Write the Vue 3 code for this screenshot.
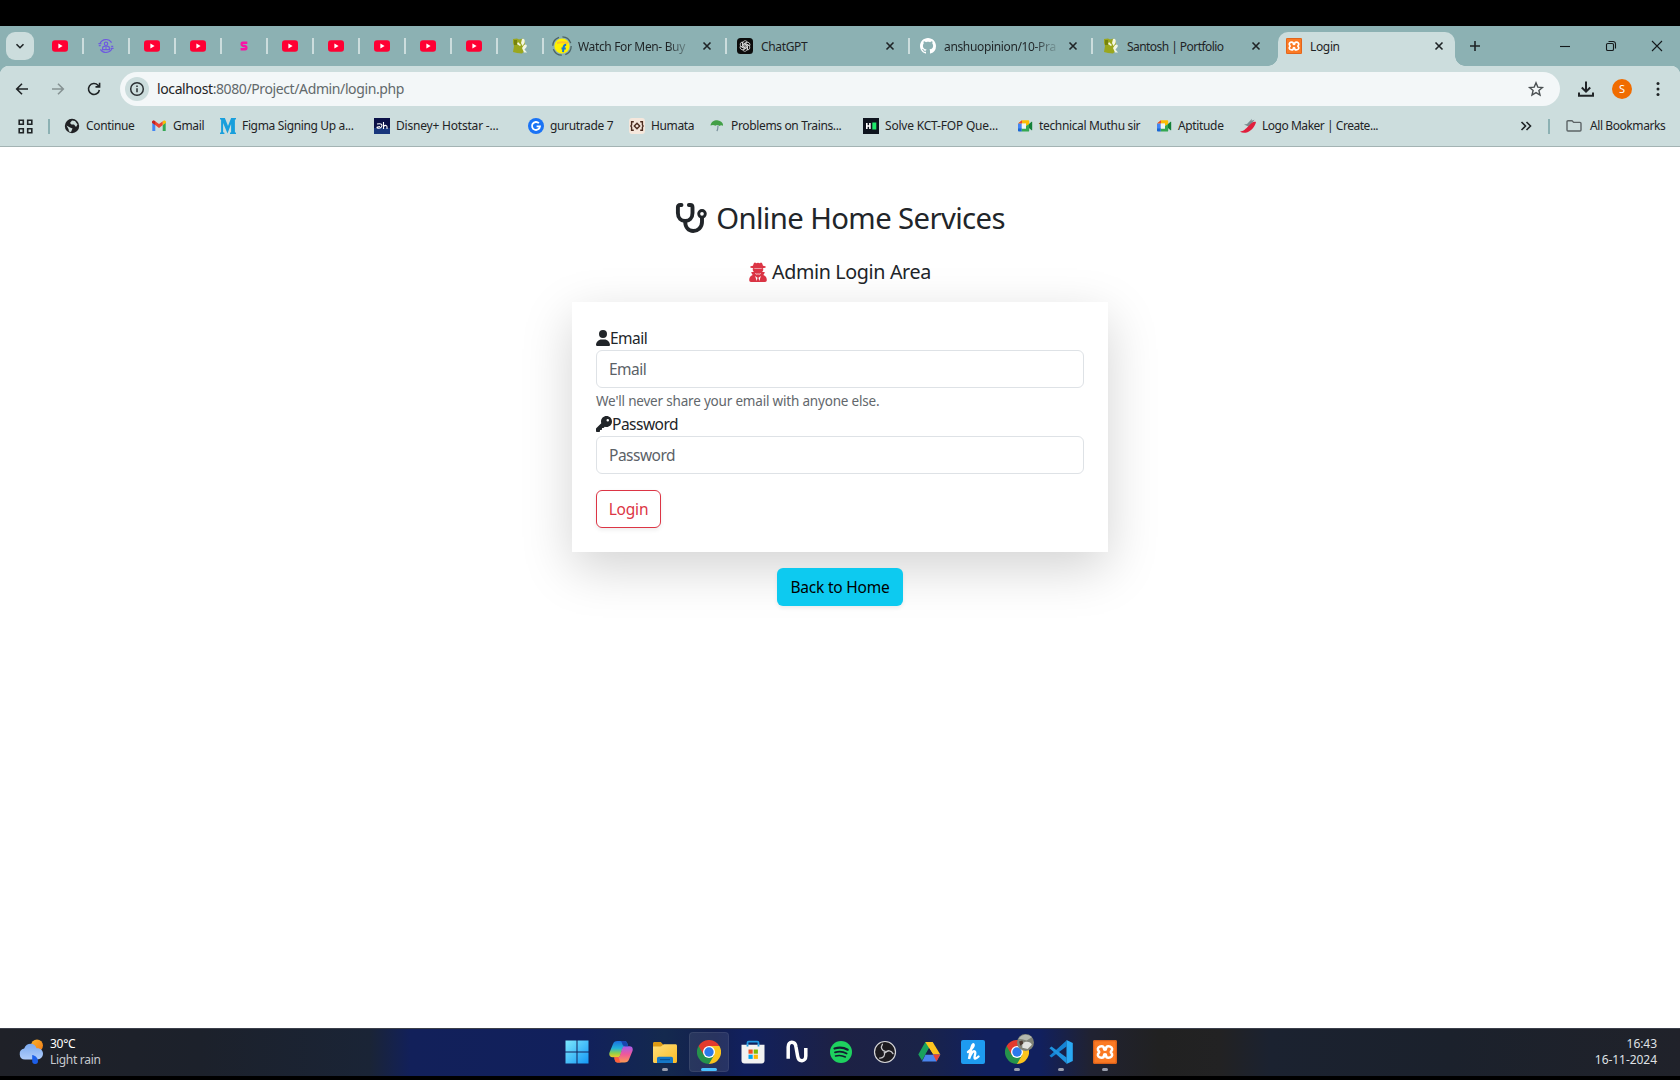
<script setup>
import { computed } from 'vue'

const small = ['yt', 'orbit', 'yt', 'yt', 's', 'yt', 'yt', 'yt', 'yt', 'yt', 'leaf']
const tabs = [
  { icon: 'flip', title: 'Watch For Men- Buy', fade: true },
  { icon: 'gpt', title: 'ChatGPT' },
  { icon: 'github', title: 'anshuopinion/10-Pra', fade: true },
  { icon: 'leaf', title: 'Santosh | Portfolio', last: true },
]
const marks = [
  { icon: 'globe', title: 'Continue', w: 87 },
  { icon: 'gmail', title: 'Gmail', w: 69 },
  { icon: 'm', title: 'Figma Signing Up a...', w: 154 },
  { icon: 'dh', title: 'Disney+ Hotstar -...', w: 154 },
  { icon: 'g', title: 'gurutrade 7', w: 101 },
  { icon: 'humata', title: 'Humata', w: 80 },
  { icon: 'umbrella', title: 'Problems on Trains...', w: 154 },
  { icon: 'hr', title: 'Solve KCT-FOP Que...', w: 154 },
  { icon: 'meet', title: 'technical Muthu sir', w: 139 },
  { icon: 'meet', title: 'Aptitude', w: 84 },
  { icon: 'pepper', title: 'Logo Maker | Create...', w: 140 },
]
const apps = [
  { icon: 'win' }, { icon: 'copilot' }, { icon: 'folder', run: true },
  { icon: 'chrome', active: true }, { icon: 'store' }, { icon: 'nn' },
  { icon: 'spotify' }, { icon: 'obs' }, { icon: 'drive' }, { icon: 'hh' },
  { icon: 'chrome', run: true, badge: true }, { icon: 'code', run: true },
  { icon: 'xampp', run: true },
]
const items = computed(() => marks.map((m) => ({ ...m, style: { width: m.w + 'px' } })))
const turns = [0, 60, 120, 180, 240, 300]
</script>

<template>
  <svg class="defs" aria-hidden="true">
    <defs>
      <linearGradient id="gw" x1="0" y1="0" x2="1" y2="1"><stop offset="0" stop-color="#7de8fd" /><stop offset="1" stop-color="#1497f5" /></linearGradient>
      <linearGradient id="gf" x1="0" y1="0" x2="1" y2="1"><stop offset="0" stop-color="#ffdf7a" /><stop offset="1" stop-color="#fcbc25" /></linearGradient>
      <linearGradient id="gc1" x1="0" y1="0" x2="0" y2="1"><stop offset="0" stop-color="#1a6fe0" /><stop offset=".45" stop-color="#23b2d8" /><stop offset=".75" stop-color="#8fcf4a" /><stop offset="1" stop-color="#f5c827" /></linearGradient>
      <linearGradient id="gc2" x1="0" y1="0" x2="0" y2="1"><stop offset="0" stop-color="#a45cf0" /><stop offset=".5" stop-color="#f0589a" /><stop offset="1" stop-color="#fb9a52" /></linearGradient>
      <linearGradient id="gs" x1="0" y1="0" x2="1" y2="1"><stop offset="0" stop-color="#fbb32a" /><stop offset="1" stop-color="#f07a18" /></linearGradient>
      <linearGradient id="gcl" x1="0" y1="0" x2="0" y2="1"><stop offset="0" stop-color="#7ba9ee" /><stop offset="1" stop-color="#b0cdfb" /></linearGradient>
      <symbol id="yt" viewBox="0 0 16 16"><rect y="2.2" width="16" height="11.6" rx="3" fill="#ff0033" /><path d="M6.4 5.6v4.8L10.6 8z" fill="#fff" /></symbol>
      <symbol id="orbit" viewBox="0 0 16 16"><g fill="none" stroke="#6f5be0" stroke-width="1.2"><circle cx="8" cy="5.8" r="1.7" /><path d="M4.6 11.6V10c0-1.3 1.2-1.8 3.4-1.8s3.4.5 3.4 1.8v1.6zM7 10h2M2 5.4A6.6 6.6 0 0 1 13.6 4.6M14 10.6A6.6 6.6 0 0 1 2.4 11.4" /><path d="M.4 5.6h3M.8 7.6h2M12.6 10.4h3M13.2 8.4h2" /></g></symbol>
      <symbol id="s" viewBox="0 0 16 16"><path d="M11.3 4.8H6.6c-1.2 0-1.4 2.6 0 2.9l2.8.5c1.5.3 1.3 3-.1 3H4.6" fill="none" stroke="#f915a5" stroke-width="2.4" /></symbol>
      <symbol id="leaf" viewBox="0 0 16 16"><path d="M1 1l4-.5 2 1 4-1 2 3-1 10-2 2-5-.5-4-1 1-6-1-3z" fill="#9aa71d" /><path d="M2 2h3v5H2z" fill="#76820f" /><path d="M10 1c2-1 3.500 1 2.500 4L10.500 8 9 5zM12 7c2-1.500 3.500 0 2.500 2l-2 2.500 2.500 3h-3L10 10zM6 4l3 3-1 1-3-2z" fill="#f3f6e4" /></symbol>
      <symbol id="flip" viewBox="0 0 20 20"><circle cx="10" cy="10" r="9.200" fill="none" stroke="#4c6366" stroke-width="1.300" stroke-dasharray="11 3.500" /><circle cx="10" cy="10" r="7.600" fill="#fff200" /><path d="M5 6c3-1 7-1 11 0v2c-4-1-8-1-11 0z" fill="#fbc02d" /><path d="M14.200 8.700c-2 0-2.500 1-2.700 3l-.5 4.500M9.500 12.600h4.300" fill="none" stroke="#1976d2" stroke-width="2" /></symbol>
      <symbol id="gpt" viewBox="0 0 16 16"><rect width="16" height="16" rx="3.500" fill="#0c0c0c" /><g fill="none" stroke="#fff" stroke-width=".65"><path v-for="r in turns" :key="r" d="M5.800 8.900V5A2.350 2.350 0 0 1 10 3.600M6.900 8.600V5.700L10.400 3.700" :transform="`rotate(${r} 8 8)`" /></g></symbol>
      <symbol id="github" viewBox="0 0 16 16"><path fill="#fff" d="M8 0C3.580 0 0 3.580 0 8c0 3.540 2.290 6.530 5.470 7.590.4.070.55-.17.55-.38 0-.19-.01-.82-.01-1.490-2.010.37-2.530-.49-2.690-.94-.09-.23-.48-.94-.82-1.130-.28-.15-.68-.52-.01-.53.63-.01 1.080.58 1.230.82.72 1.210 1.870.87 2.330.66.07-.52.28-.87.51-1.070-1.780-.2-3.640-.89-3.640-3.950 0-.87.31-1.590.82-2.150-.08-.2-.36-1.020.08-2.120 0 0 .67-.21 2.200.82.64-.18 1.320-.27 2-.27s1.360.09 2 .27c1.530-1.040 2.200-.82 2.200-.82.44 1.100.16 1.920.08 2.120.51.56.82 1.270.82 2.150 0 3.070-1.870 3.750-3.650 3.950.29.25.54.73.54 1.480 0 1.070-.01 1.930-.01 2.200 0 .21.15.46.55.38A8.010 8.010 0 0 0 16 8c0-4.420-3.580-8-8-8z" /></symbol>
      <symbol id="xampp" viewBox="0 0 24 24"><rect width="24" height="24" rx="2" fill="#fb7a24" /><rect x=".7" y=".7" width="22.600" height="22.600" rx="1.600" fill="none" stroke="#d9601a" stroke-width="1.200" /><path d="M8.600 6.200C5.600 6.200 4.400 8.200 5 10c.3.900 1.200 1.100 1.200 2S5.300 13.100 5 14c-.6 1.800.6 3.800 3.600 3.800 2.400 0 2.400-1.600 2.400-2.600 0-.7.400-1 1-1s1 .3 1 1c0 1 0 2.600 2.400 2.600 3 0 4.200-2 3.600-3.800-.3-.9-1.200-1.100-1.200-2s.9-1.100 1.200-2c.6-1.800-.6-3.800-3.600-3.800-2.400 0-2.400 1.600-2.400 2.600 0 .7-.4 1-1 1s-1-.3-1-1c0-1 0-2.600-2.400-2.600z" fill="none" stroke="#fff" stroke-width="2.500" /></symbol>
      <symbol id="globe" viewBox="0 0 16 16"><circle cx="8" cy="8" r="7.200" fill="#202124" /><path d="M2.500 7.500L6 9.500l2.500 1L7 14l-2-.5-.5-2.500zM8 2.500l3 .5 2.500 3.500L12 9l-2-2.500H7.500L6 5z" fill="#ccdddb" /></symbol>
      <symbol id="gmail" viewBox="0 0 16 16"><path d="M1.300 4v9h3V7z" fill="#4285f4" /><path d="M11.700 7v6h3V4z" fill="#34a853" /><path d="M1 4.500C1 2.600 3 2.200 4.200 3.200L8 6.100l3.800-2.900v3.900L8 10 4.200 7.100z" fill="#ea4335" /><path d="M1 4.300c0-1.800 2-2.200 3.200-1.200v4L1 4.800z" fill="#c5221f" /><path d="M15 4.300c0-1.800-2-2.200-3.200-1.200v4L15 4.800z" fill="#fbbc04" /></symbol>
      <symbol id="m" viewBox="0 0 16 16"><path d="M0 0h4.900L8 8 11.100 0H16v1.200l-1.100.6v12.400l1.100.6V16h-6v-1.200l1.100-.6V6L7.500 15.500 3.100 5v9.200l1.300.6V16H0v-1.200l1.100-.6V1.800L0 1.200z" fill="#189fdc" /></symbol>
      <symbol id="dh" viewBox="0 0 16 16"><rect width="16" height="16" fill="#0b1148" /><rect y="10" width="16" height="6" fill="#18367c" /><path d="M3 6c5-1 6 1 4 3.500-1 .8-4 1-4 0s1.500-1 3-1M9.500 4v7M9.500 8.500c2-2 3.500-1 3.500.5v2" fill="none" stroke="#fff" stroke-width="1.100" /></symbol>
      <symbol id="g" viewBox="0 0 16 16"><circle cx="8" cy="8" r="8" fill="#1a73f5" /><path d="M10.900 5.200A4 4 0 1 0 12 8.400H8.600" fill="none" stroke="#fff" stroke-width="1.800" /></symbol>
      <symbol id="humata" viewBox="0 0 16 16"><rect width="16" height="16" rx="3" fill="#f5e7dc" /><path d="M4.800 3.700H2.600v3.100L1.900 8l.7 1.200v3.100h2.200M11.200 3.700h2.200v3.100l.7 1.200-.7 1.200v3.100h-2.200M8 5.300L10.700 8 8 10.700 5.300 8z" fill="none" stroke="#4b2c20" stroke-width="1.400" /></symbol>
      <symbol id="umbrella" viewBox="0 0 16 16"><path d="M1.500 7.500C2 3.800 5.600 1.900 9 2.400s5.500 3 5 5.300c-1.500-.9-2.500-.7-3.500.3-1.400-1.300-2.800-1.200-4.200-.3-1.200-.9-3-1-4.800-.2z" fill="#43a047" /><path d="M9 7.500c-.3 2 .2 4-1.200 5.500" fill="none" stroke="#78909c" stroke-width="1.200" /></symbol>
      <symbol id="hr" viewBox="0 0 16 16"><rect width="16" height="16" fill="#0e141e" /><path d="M3.800 5v6M6.900 5v6M3.800 8h3" stroke="#fff" stroke-width="1.600" /><rect x="9.300" y="4.500" width="4" height="7" fill="#1fe96b" /></symbol>
      <symbol id="meet" viewBox="0 0 16 16"><path d="M5 2.200h6c.8 0 1.200.5 1.200 1.200V6.500L9 8V5.600H1z" fill="#fbbc04" /><path d="M1 5.600l4-3.400v3.400z" fill="#ea4335" /><path d="M1 5.600h3.800V11H1z" fill="#4285f4" /><path d="M1 10.600h3.800v3H2.200c-.8 0-1.200-.5-1.200-1.200z" fill="#1967d2" /><path d="M4.800 10.600H9V8l3.200-2v6.400c0 .8-.5 1.200-1.200 1.200H4.800z" fill="#34a853" /><path d="M12 6l2.600-2.200c.3-.2.600-.1.600.3v7.800c0 .4-.3.500-.6.300L12 10z" fill="#128038" /><path d="M4.800 5.600H9v5H4.800z" fill="#eef5f4" /></symbol>
      <symbol id="pepper" viewBox="0 0 16 16"><path d="M4 6.500l3-.5L12 .8l-.5 2 3-1L9.500 9z" fill="#7d8b90" /><path d="M0 13.500c3.500 0 6-3 8.500-5.500S13.500 3 16 4c-1 4.500-4.500 8.500-8.500 10.200-3 1-5.500.8-7.500-.7z" fill="#e01e3c" /></symbol>
      <symbol id="win" viewBox="0 0 24 24"><path d="M.5.500h11v11H.5zM12.500.500h11v11h-11zM.5 12.500h11v11H.5zM12.500 12.500h11v11h-11z" fill="url(#gw)" /></symbol>
      <symbol id="copilot" viewBox="0 0 24 24"><path d="M8.500 1h7c1.600 0 2.300 1 2.800 2.500l.9 2.700h-2.700c-1.600 0-2.400.8-2.900 2.300l-2 6.500c-.6 1.700-1.500 2.300-3 2.300H3.500c-2.600 0-3.800-2-3-4.800L4 4c.7-2 2-3 4.500-3z" fill="url(#gc1)" /><path d="M15.500 22.500h-7c-1.600 0-2.300-1-2.700-2.500l-.5-2.700h3c1.600 0 2.400-.8 2.900-2.300l2-6.500c.6-1.700 1.500-2.300 3-2.300h4.300c2.600 0 3.800 2 3 4.800l-3.500 8.500c-.7 2-2 3-4.500 3z" fill="url(#gc2)" /><path d="M11 1h4.500c1.600 0 2.300 1 2.800 2.500l.9 2.700h-3.400c-1 0-1.900-.6-2.300-1.700L13 3c-.4-1.200-1-1.900-2-2z" fill="#1746b0" /><path d="M12.500 22.500H8.500c-1.600 0-2.300-1-2.700-2.500l-.5-2.700h2.900c1 0 1.600.5 2 1.700l.5 2c.3.900.8 1.300 1.800 1.500z" fill="#ff5f3c" /></symbol>
      <symbol id="folder" viewBox="0 0 24 24"><path d="M0 3.500C0 2.500.6 2 1.500 2h6.300L10.500 5H10v4H0z" fill="#dd9a13" /><path d="M0 6.500h8l2.800-2.300h11.700c.9 0 1.500.6 1.500 1.500v15.800c0 .9-.6 1.500-1.500 1.500h-21C.6 23 0 22.400 0 21.500z" fill="url(#gf)" /><path d="M4 23v-4.500c0-1 .8-1.800 1.800-1.800h12.400c1 0 1.800.8 1.800 1.800V23z" fill="#1478c8" /><path d="M7 19.700h10" stroke="#0b4d8c" stroke-width="1" /></symbol>
      <symbol id="chrome" viewBox="0 0 24 24"><path d="M12 12V6h10.400A12 12 0 0 1 12 24z" fill="#fcc41d" /><path d="M12 12l5.200 3L12 24A12 12 0 0 1 1.600 6z" fill="#26934b" /><path d="M1.600 6L6.800 15 12 12V6h10.400A12 12 0 0 0 1.600 6z" fill="#e33b2e" /><circle cx="12" cy="12" r="6" fill="#fff" /><circle cx="12" cy="12" r="4.700" fill="#2b79ea" /></symbol>
      <symbol id="store" viewBox="0 0 24 24"><path d="M6.500 7V2.800c0-.7.5-1.200 1.200-1.200h8.600c.7 0 1.200.5 1.200 1.200V7" fill="none" stroke="#1f9ae4" stroke-width="1.800" /><path d="M.5 4.800h23v15.700c0 2-1 3-3 3h-17c-2 0-3-1-3-3z" fill="#f2f2f2" /><path d="M5.600 4.800h1.800V6.500H5.600zM16.600 4.800h1.800v1.700h-1.800z" fill="#1f9ae4" /><path d="M7.500 9.500h4.200v4.200H7.500z" fill="#f25022" /><path d="M12.700 9.500h4.200v4.200h-4.200z" fill="#7fba00" /><path d="M7.500 14.700h4.200v4.200H7.500z" fill="#00a4ef" /><path d="M12.700 14.700h4.200v4.200h-4.200z" fill="#ffb900" /></symbol>
      <symbol id="nn" viewBox="0 0 24 24"><path d="M3.200 18.700V7c0-6.200 7-6.200 7.800 0l1.600 9c1 6.500 8.200 6 8.200 0V8" fill="none" stroke="#fff" stroke-width="3.500" /></symbol>
      <symbol id="spotify" viewBox="0 0 24 24"><circle cx="12" cy="12" r="11" fill="#1ed15f" /><g fill="none" stroke="#121c30" stroke-linecap="round"><path d="M5.500 8.500c4.500-1.300 9.500-.9 13.200 1.200" stroke-width="2.200" /><path d="M6 12.300c4-1.100 8.300-.7 11.600 1.200" stroke-width="1.800" /><path d="M6.500 15.900c3.500-.9 7-.5 9.900 1.100" stroke-width="1.500" /></g></symbol>
      <symbol id="obs" viewBox="0 0 24 24"><circle cx="12" cy="12" r="10.500" fill="#1d1b20" stroke="#d5d5d7" stroke-width="1.200" /><g fill="none" stroke="#c9c9cc" stroke-width="1.300" stroke-linecap="round"><path v-for="r in [0, 120, 240]" :key="r" d="M12.300 11.300C8.800 10.800 7.300 7.500 9.400 4.300" :transform="`rotate(${r} 12 12)`" /></g></symbol>
      <symbol id="drive" viewBox="0 0 24 24"><path d="M8.300 2h7.400L5 20.500 1.300 14.500z" fill="#1aa15d" /><path d="M8.300 2h7.400l7.600 12.500h-7.300z" fill="#fcc31e" /><path d="M8.600 14.500h14.700L19.500 21.500H5z" fill="#4a85ee" /><path d="M16 14.500h7.300L19.500 21.500z" fill="#e94335" /><path d="M12 8.300l4 6.200H8.500z" fill="#161f47" /></symbol>
      <symbol id="hh" viewBox="0 0 24 24"><rect width="24" height="24" rx="2" fill="#1e9bf0" /><path d="M7 12c3-2 6.500-6 5.500-7.500S9.500 10 8 19c1.500-5 4-8.500 5.800-7.500s-1.600 6.500.2 7c1.200.3 2.500-1 3.500-2" fill="none" stroke="#fff" stroke-width="2.400" stroke-linecap="round" /></symbol>
      <symbol id="code" viewBox="0 0 24 24"><path d="M17.500.5L2 14.500l-1.600 1.300L2.500 17.500 17.500 6.600z" fill="#1583d4" /><path d="M17.500 23.500L2 9.500.4 8.200 2.500 6.500l15 10.900z" fill="#1f94e0" /><path d="M17.500 0l6.300 3v18l-6.300 3z" fill="#2aa9f3" /></symbol>
    </defs>
  </svg>

  <div class="screen">
    <header class="tabs">
      <div class="search"><svg viewBox="0 0 10 10" width="10" height="10"><path d="M1.500 3.200L5 6.700l3.500-3.500" class="ln" /></svg></div>
      <div v-for="(s, i) in small" :key="'s' + i" class="mini"><svg width="16" height="16"><use :href="'#' + s" /></svg></div>
      <div v-for="t in tabs" :key="t.title" class="tab" :class="{ last: t.last }">
        <svg class="fav" :class="{ big: t.icon === 'flip' }"><use :href="'#' + t.icon" /></svg>
        <span class="title" :class="{ fade: t.fade }">{{ t.title }}</span>
        <svg class="x" viewBox="0 0 10 10"><path d="M1.500 1.500l7 7M8.500 1.500l-7 7" class="ln" /></svg>
      </div>
      <div class="tab active">
        <svg class="fav"><use href="#xampp" /></svg>
        <span class="title">Login</span>
        <svg class="x" viewBox="0 0 10 10"><path d="M1.500 1.500l7 7M8.500 1.500l-7 7" class="ln" /></svg>
      </div>
      <svg class="plus" viewBox="0 0 12 12"><path d="M6 1v10M1 6h10" class="ln" /></svg>
      <div class="wins">
        <svg viewBox="0 0 12 12"><path d="M1 6.500h10" class="thin" /></svg>
        <svg viewBox="0 0 12 12"><path d="M3.500 1.500H8a2.500 2.500 0 0 1 2.500 2.500v4.500M2.800 3.500h4.400c.8 0 1.300.5 1.300 1.300v4.400c0 .8-.5 1.300-1.300 1.300H2.800c-.8 0-1.300-.5-1.300-1.300V4.800c0-.8.5-1.300 1.300-1.300z" class="thin" /></svg>
        <svg viewBox="0 0 12 12"><path d="M1 1l10 10M11 1L1 11" class="thin" /></svg>
      </div>
    </header>

    <section class="chrome">
      <div class="bar">
        <svg class="nav" viewBox="0 0 16 16"><path d="M14 8H3M8 2.700L2.700 8 8 13.300" class="ln" /></svg>
        <svg class="nav dim" viewBox="0 0 16 16"><path d="M2 8h11M8 2.700L13.300 8 8 13.300" class="ln" /></svg>
        <svg class="nav reload" viewBox="0 0 16 16"><path d="M13.400 9A5.500 5.500 0 1 1 12 4.200L13.300 5.600M13.600 1.800v4.100H9.500" class="ln" /></svg>
        <div class="url">
          <div class="info"><svg viewBox="0 0 16 16" width="16" height="16"><circle cx="8" cy="8" r="6.300" fill="none" stroke="#2b3033" stroke-width="1.500" /><path d="M8 7.200v4M8 4.500v1.400" stroke="#2b3033" stroke-width="1.500" /></svg></div>
          <div class="addr"><b>localhost</b>:8080/Project/Admin/login.php</div>
          <svg class="star" viewBox="0 0 18 18"><path d="M9 2.800l1.800 4.300 4.600.4-3.500 3 1.100 4.600L9 12.600l-4 2.500 1.100-4.600-3.500-3 4.600-.4z" fill="none" stroke="#4a5052" stroke-width="1.400" /></svg>
        </div>
        <svg class="dl" viewBox="0 0 18 18"><path d="M9 1.500v10M4.800 7.500L9 11.700l4.200-4.200M2 12.500v3.300h14v-3.300" fill="none" stroke="#202427" stroke-width="2" /></svg>
        <div class="avatar">S</div>
        <svg class="dots" viewBox="0 0 4 16"><circle cx="2" cy="2.500" r="1.500" /><circle cx="2" cy="8" r="1.500" /><circle cx="2" cy="13.500" r="1.500" /></svg>
      </div>
      <div class="marks">
        <svg class="grid" viewBox="0 0 15 15"><path d="M1.200 1.200h4.100v4.100H1.200zM9.700 1.200h4.100v4.100H9.700zM1.200 9.700h4.100v4.100H1.200zM9.700 9.700h4.100v4.100H9.700z" class="ln" /></svg>
        <i class="sep"></i>
        <div class="list">
          <div v-for="m in items" :key="m.title" class="mark" :style="m.style"><svg width="16" height="16"><use :href="'#' + m.icon" /></svg><span>{{ m.title }}</span></div>
        </div>
        <svg class="more" viewBox="0 0 12 12"><path d="M1.500 2L5.500 6l-4 4M6.500 2l4 4-4 4" class="ln" /></svg>
        <i class="sep second"></i>
        <svg class="dir" viewBox="0 0 16 16"><path d="M1 3.700c0-.6.400-1 1-1h4l1.700 1.700H14c.6 0 1 .4 1 1V12c0 .6-.4 1-1 1H2c-.6 0-1-.4-1-1z" fill="none" stroke="#5c6466" stroke-width="1.400" /></svg>
        <span class="all">All Bookmarks</span>
      </div>
    </section>

    <main class="page">
      <h2 class="brand">
        <svg viewBox="0 0 32 32"><g fill="none" stroke="#212529" stroke-width="3.900" stroke-linecap="round"><path d="M6.500 3H5.200C3.600 3 2.900 3.800 2.900 5.300V11c0 5 3.300 8 7.300 8s7.300-3 7.300-8V5.300C17.500 3.800 16.800 3 15.200 3h-1.300" /><path d="M10.200 19.500C10.200 25.500 13.700 29 18.200 29s8.800-3.500 8.800-9v-5" /></g><circle cx="27" cy="11.800" r="3.300" fill="#fff" stroke="#212529" stroke-width="2.900" /></svg>
        <span>Online Home Services</span>
      </h2>
      <p class="area">
        <svg viewBox="0 0 448 512"><path fill="#dc3545" d="M224 16c-19 0-35 16-52 14-22-40-62-12-76 66-44 8-72 18-72 32s30 26 76 33v23H96c-9 0-14 10-9 18l30 54H64c-9 0-15 9-12 17l35 60C34 354 0 400 0 448v22c0 23 19 42 42 42h364c23 0 42-19 42-42v-22c0-48-34-94-87-115l35-60c3-8-3-17-12-17h-53l30-54c5-8 0-18-9-18h-4v-23c46-7 76-19 76-33s-28-24-72-32c-14-78-54-106-76-66-17 2-33-14-52-14z" /><path fill="#fff" d="M128 169h192v10H128zM150 290c24 16 52 16 74 2 22 14 50 14 74-2v12c-20 26-56 26-74 2-18 24-54 24-74-2zM150 358l62 42-22 84zM298 358l-62 42 22 84z" /></svg>
        <span>Admin Login Area</span>
      </p>
      <form class="card" @submit.prevent>
        <label><svg class="user" viewBox="0 0 448 512"><path d="M224 256A128 128 0 1 0 224 0a128 128 0 1 0 0 256zm-45.700 48C79.800 304 0 383.800 0 482.300C0 498.700 13.300 512 29.700 512H418.300c16.400 0 29.700-13.300 29.700-29.700C448 383.800 368.200 304 269.700 304H178.300z" /></svg><span>Email</span></label>
        <input type="email" placeholder="Email" />
        <small>We'll never share your email with anyone else.</small>
        <label><svg class="key" viewBox="0 0 512 512"><path d="M336 352c97.200 0 176-78.800 176-176S433.200 0 336 0S160 78.800 160 176c0 18.700 2.900 36.800 8.300 53.700L7 391c-4.500 4.500-7 10.600-7 17v80c0 13.300 10.700 24 24 24h80c13.300 0 24-10.700 24-24V448h40c13.300 0 24-10.700 24-24V384h40c6.400 0 12.500-2.500 17-7l33.300-33.300c16.900 5.400 35 8.300 53.700 8.300zM376 96a40 40 0 1 1 0 80 40 40 0 1 1 0-80z" /></svg><span>Password</span></label>
        <input type="password" placeholder="Password" />
        <button class="login">Login</button>
      </form>
      <a class="back">Back to Home</a>
    </main>

    <footer class="task">
      <div class="weather">
        <svg viewBox="0 0 24 26"><circle cx="18" cy="6.500" r="6" fill="url(#gs)" /><path d="M6 20.500a5.500 5.500 0 0 1-.8-10.900C6.500 6 9 4.800 11.500 4.800c3.200 0 5.300 1.900 6 4.400 3.500-.4 6.500 1.800 6.500 5.400 0 3.500-2.500 5.900-6 5.900z" fill="url(#gcl)" /><path d="M13.200 16c3.200.5 5.800 3 5.800 6a2.900 2.900 0 0 1-5.800.3z" fill="#1d5fe8" /></svg>
        <div><div class="temp">30°C</div><div class="rain">Light rain</div></div>
      </div>
      <div class="apps">
        <div v-for="(a, i) in apps" :key="i" class="app" :class="{ on: a.active, run: a.run }">
          <svg width="24" height="24"><use :href="'#' + a.icon" /></svg>
          <svg v-if="a.badge" class="badge" viewBox="0 0 16 16"><circle cx="8" cy="8" r="8" fill="#7f8277" /><path d="M1.500 4.500A8 8 0 0 1 14 3L9 6 5 5z" fill="#b4b8ae" /><path d="M5 9c3-3 8-2 9 1l-4 4-5-1z" fill="#e2e4df" /><path d="M2 7l3-1 1 3-3 2z" fill="#4c3b30" /></svg>
        </div>
      </div>
      <div class="clock"><div>16:43</div><div>16-11-2024</div></div>
    </footer>
  </div>
</template>

<style>
html, body { margin: 0; background: #000; overflow: hidden; }
</style>

<style scoped>
* { box-sizing: border-box; }
.defs { position: absolute; width: 0; height: 0; }
.screen { width: 1680px; height: 1080px; padding: 26px 0 4px; background: #000; display: flex; flex-direction: column; font-family: "Noto Sans", "Open Sans", sans-serif; font-size: 12px; color: #1f2426; overflow: hidden; }
.screen svg { flex: none; display: block; }
.ln { fill: none; stroke: #1f2426; stroke-width: 1.6; }
.thin { fill: none; stroke: #14191b; stroke-width: 1.1; }

.tabs { height: 40px; background: #8cb1b3; display: flex; align-items: center; flex: none; }
.search { width: 28px; height: 28px; margin: 0 4px 0 6px; border-radius: 9px; background: #ccdddd; display: flex; align-items: center; justify-content: center; }
.mini { width: 46px; height: 16px; display: flex; justify-content: center; border-right: 2px solid #ccdddd; }
.tab { width: 183px; height: 16px; border-right: 2px solid #ccdddd; display: flex; align-items: center; flex: none; padding: 0 13px 0 10px; }
.tab.last { border: 0; padding-right: 15px; }
.fav { width: 16px; height: 16px; margin-right: 8px; }
.fav.big { width: 20px; height: 20px; margin: 0 6px 0 -2px; }
.title { flex: 1; white-space: nowrap; line-height: 20px; letter-spacing: -.35px; margin: 2px 6px 0 0; }
.last .title { letter-spacing: -.55px; }
.fade { mask-image: linear-gradient(90deg, #000 75%, transparent 99%); }
.x { width: 10px; height: 10px; }
.tab.active { position: relative; width: 177px; height: 34px; margin: 0 0 0 2px; align-self: flex-end; background: #ccdddd; border: 0; border-radius: 10px 10px 0 0; padding: 0 11px 6px 8px; }
.active::before, .active::after { content: ""; position: absolute; bottom: 0; width: 10px; height: 10px; }
.active::before { left: -10px; background: radial-gradient(circle at 0 0, #8cb1b3 9.500px, #ccdddd 10px); }
.active::after { right: -10px; background: radial-gradient(circle at 100% 0, #8cb1b3 9.500px, #ccdddd 10px); }
.plus { width: 12px; height: 12px; margin-left: 14px; }
.wins { margin-left: auto; display: flex; gap: 34px; padding-right: 17px; }
.wins svg { width: 12px; height: 12px; }

.chrome { height: 81px; flex: none; border-bottom: 1px solid #a3b3b3; background: radial-gradient(circle at 9px 9px, #ccdddd 9px, #8cb1b3 9.500px) 0 0 / 9px 9px no-repeat, radial-gradient(circle at 0 9px, #ccdddd 9px, #8cb1b3 9.500px) 100% 0 / 9px 9px no-repeat, #ccdddd; }
.bar { display: flex; align-items: center; height: 46px; padding-left: 14px; }
.nav { width: 16px; height: 16px; margin-right: 20px; }
.dim { opacity: .4; }
.reload { margin-right: 18px; }
.url { width: 1440px; height: 34px; border-radius: 17px; background: #f3f7f8; display: flex; align-items: center; padding: 0 15px 0 5px; }
.info { width: 24px; height: 24px; border-radius: 50%; background: #ccdddd; display: flex; align-items: center; justify-content: center; }
.addr { flex: 1; margin: 0 0 1px 8px; font-size: 14px; color: #62696b; letter-spacing: -.39px; }
.addr b { font-weight: 400; color: #1f2426; }
.star { width: 18px; height: 18px; }
.dl { width: 18px; height: 18px; margin-left: 17px; }
.avatar { width: 20px; height: 20px; margin-left: 17px; border-radius: 50%; background: #f06c00; color: #fff; font-size: 11px; line-height: 20px; text-align: center; }
.dots { width: 4px; height: 16px; margin-left: 24px; fill: #1f2426; }
.marks { display: flex; align-items: center; height: 28px; padding-left: 18px; white-space: nowrap; }
.grid { width: 15px; height: 15px; }
.sep { width: 2px; height: 15px; margin: 0 14px 0 15px; background: #8cb1b3; }
.list { display: flex; width: 1456px; }
.mark { display: flex; align-items: center; gap: 6px; flex: none; letter-spacing: -.35px; }
.mark:last-child { letter-spacing: -.47px; }
.mark:nth-child(4), .mark:nth-child(8) { letter-spacing: -.2px; }
.mark span, .all { margin-bottom: 1px; }
.more { width: 12px; height: 12px; }
.sep.second { margin: 0 16px 0 16px; }
.dir { width: 16px; height: 16px; }
.all { margin-left: 8px; letter-spacing: -.42px; }

.page { flex: 1; background: #fff; display: flex; flex-direction: column; align-items: center; color: #212529; }
.brand { margin: 51px 0 0; height: 40px; display: flex; align-items: center; gap: 9px; font-size: 29.300px; font-weight: 400; line-height: 40px; letter-spacing: -.62px; }
.brand svg { width: 32px; height: 32px; }
.area { margin: 19px 0 0; height: 30px; display: flex; align-items: center; gap: 5px; font-size: 19.700px; line-height: 30px; letter-spacing: -.36px; }
.area svg { width: 18px; height: 20px; }
.card { width: 536px; height: 250px; margin-top: 15px; padding: 24px; background: #fff; box-shadow: 0 16px 48px rgba(0, 0, 0, .175); display: flex; flex-direction: column; font-size: 15.500px; }
label { display: flex; align-items: center; height: 24px; line-height: 24px; letter-spacing: -.5px; }
.user { width: 14px; height: 16px; fill: #212529; }
.key { width: 16px; height: 16px; fill: #212529; }
input { width: 488px; height: 38px; padding: 6px 12px; border: 1px solid #dee2e6; border-radius: 6px; font: inherit; letter-spacing: -.5px; background: #fff; outline: 0; }
input::placeholder { color: #5b6167; opacity: 1; }
small { height: 24px; font-size: 13.500px; line-height: 27px; color: #62676c; letter-spacing: -.19px; }
.login { width: 65px; height: 38px; margin-top: 16px; padding: 0; border: 1px solid #dc3545; border-radius: 6px; background: #fff; color: #dc3545; font: inherit; letter-spacing: -.2px; box-shadow: 0 2px 4px rgba(0, 0, 0, .075); }
.back { width: 126px; height: 38px; margin-top: 16px; border-radius: 6px; background: #0dcaf0; color: #000; font-size: 15.500px; line-height: 38px; text-align: center; letter-spacing: -.2px; box-shadow: 0 2px 4px rgba(0, 0, 0, .075); position: relative; }

.task { height: 48px; padding-bottom: 2px; flex: none; display: flex; align-items: center; border-top: 1px solid #3b3f4a; color: #dfe1e5; background: linear-gradient(90deg, #1f2128 0, #1c212b 200px, #1a2436 370px, #12205a 410px, #11205c 580px, #14294e 665px, #131f50 715px, #11205e 745px, #1d2144 840px, #1a2348 920px, #11205e 985px, #11205e 1040px, #202232 1090px, #212121 1160px, #222223 1220px, #1b2230 1270px, #1b212c 1450px, #20222a 1680px); }
.weather { display: flex; align-items: center; width: 557px; padding-left: 19px; }
.weather svg { width: 24px; height: 26px; margin-right: 7px; }
.weather div, .clock div { line-height: 16px; }
.temp { color: #fff; letter-spacing: -.3px; }
.rain { color: #c6c9cf; letter-spacing: -.3px; }
.apps { display: flex; gap: 4px; }
.app { position: relative; width: 40px; height: 40px; display: flex; align-items: center; justify-content: center; border-radius: 4px; }
.on { background: rgba(255, 255, 255, .09); box-shadow: inset 0 0 0 1px rgba(255, 255, 255, .07); }
.on::after, .run::after { content: ""; position: absolute; bottom: 1px; left: 17px; width: 6px; height: 3px; border-radius: 2px; background: #9a9fae; }
.on::after { left: 12px; width: 16px; background: #4cc2ff; }
.badge { position: absolute; top: 2px; right: 3px; width: 17px; height: 17px; }
.clock { margin-left: auto; padding-right: 23px; text-align: right; letter-spacing: -.05px; }
</style>
